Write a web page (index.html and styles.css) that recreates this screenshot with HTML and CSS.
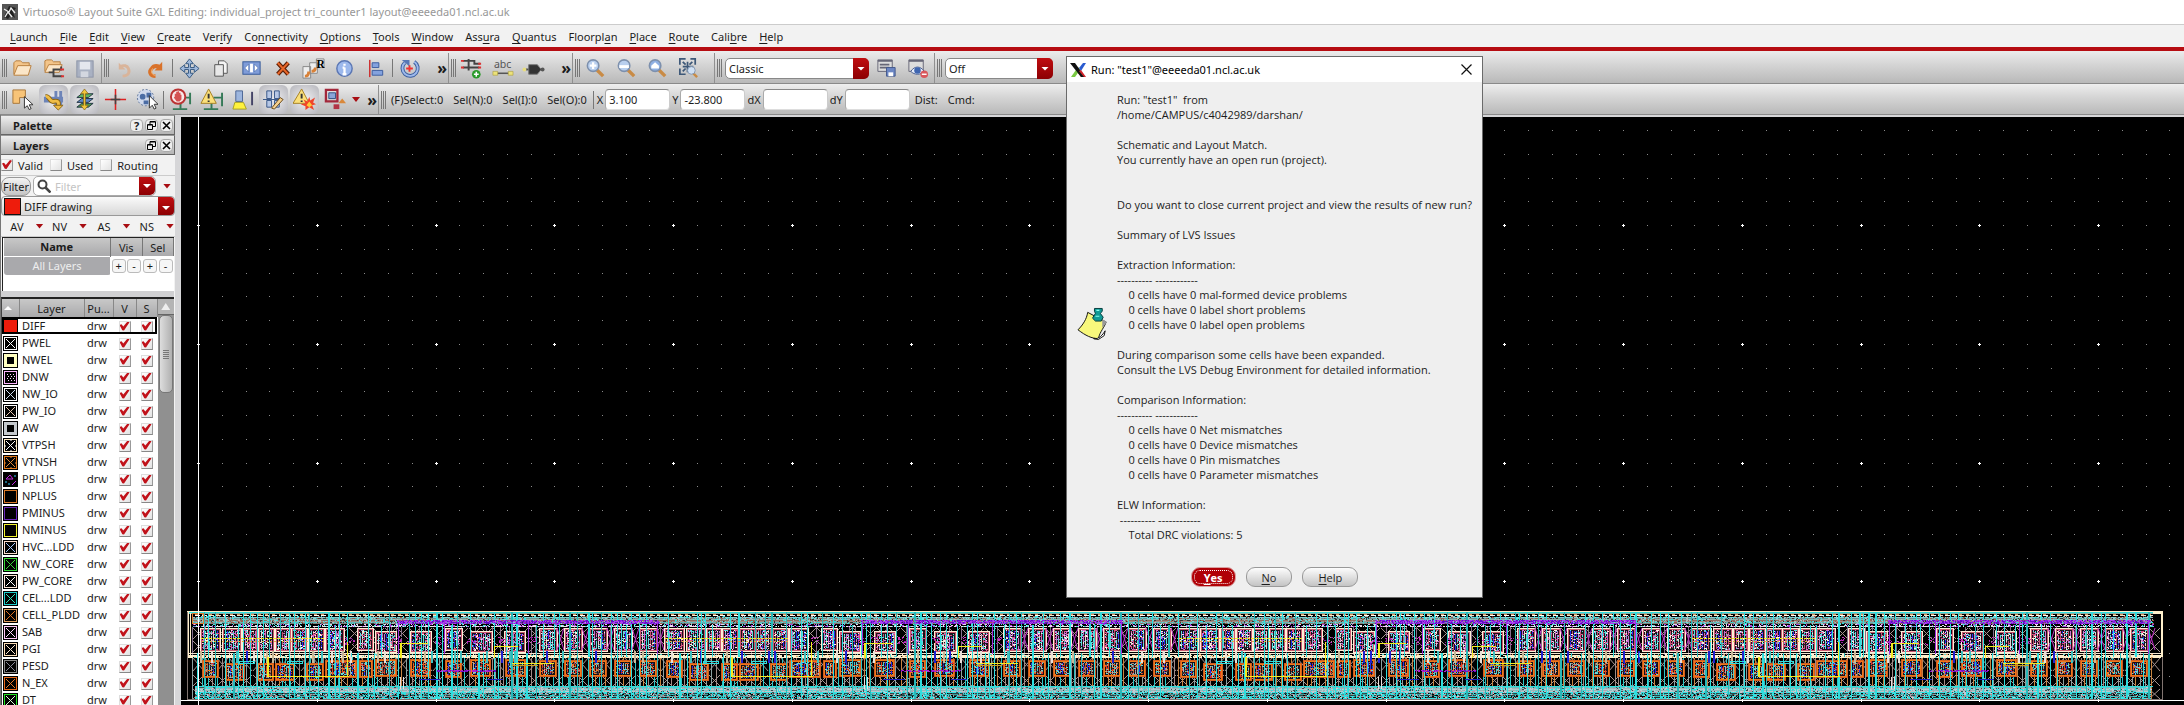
FILE: index.html
```html
<!DOCTYPE html>
<html lang="en">
<head>
<meta charset="utf-8">
<title>Virtuoso Layout Suite GXL</title>
<link rel="stylesheet" href="styles.css">
</head>
<body>
<header class="titlebar">
  <svg class="app-icon" viewBox="0 0 16 16"><rect width="16" height="16" fill="#555"/><path d="M2 13L7 2l7 2-3 4 2 6-4-3-3 4z" fill="#222"/><path d="M2 5l5 3 2-4 4 5M3 13l3-5 4 5" fill="none" stroke="#eee" stroke-width="1.3"/></svg>
  <h1 class="window-title">Virtuoso® Layout Suite GXL Editing: individual_project tri_counter1 layout@eeeeda01.ncl.ac.uk</h1>
</header>

<nav class="menubar" aria-label="Main menu">
  <button><u>L</u>aunch</button><button><u>F</u>ile</button><button><u>E</u>dit</button><button><u>V</u>iew</button><button><u>C</u>reate</button><button>Ver<u>i</u>fy</button><button>Co<u>n</u>nectivity</button><button><u>O</u>ptions</button><button><u>T</u>ools</button><button><u>W</u>indow</button><button>Ass<u>u</u>ra</button><button><u>Q</u>uantus</button><button>Floorpl<u>a</u>n</button><button><u>P</u>lace</button><button><u>R</u>oute</button><button>Cali<u>b</u>re</button><button><u>H</u>elp</button>
</nav>

<div class="toolbar toolbar-first" role="toolbar" aria-label="Edit tools">
  <div class="tool-group">
    <span class="handle"></span>
    <button class="tool" aria-label="Open"><svg viewBox="0 0 24 24"><path d="M3 18V6l2-2h5l2 2h7v3" fill="#f3c58a" stroke="#b9803f"/><path d="M3 19l4-10h14l-3 10z" fill="#fbe6c8" stroke="#b9803f"/></svg></button>
    <button class="tool" aria-label="Open hierarchy"><svg viewBox="0 0 24 24"><path d="M3 15V4l2-1h5l2 2h7v3" fill="#f3c58a" stroke="#b9803f"/><path d="M3 16l4-8h14l-3 8z" fill="#fbe6c8" stroke="#b9803f"/><path d="M7 16h5M12 12v9M12 13h8v-3M12 20h9" fill="none" stroke="#444" stroke-width="2"/><path d="M19 13h4M20 20h3" stroke="#d33" stroke-width="2"/></svg></button>
    <button class="tool" aria-label="Save" disabled><svg viewBox="0 0 24 24"><rect x="4" y="4" width="17" height="17" fill="#a9b1c2" stroke="#8d95a8"/><rect x="7" y="5" width="11" height="8" fill="#e4e7ee"/><rect x="8" y="15" width="8" height="6" fill="#d3d7e0"/></svg></button>
  </div>
  <div class="tool-group">
    <span class="handle"></span>
    <button class="tool" aria-label="Undo" disabled><svg viewBox="0 0 24 24"><path d="M10 20c6 0 8-4 6-8-1-3-5-4-8-2" fill="none" stroke="#d9b49a" stroke-width="3"/><path d="M6 6v7h7z" fill="#d9b49a"/></svg></button>
    <button class="tool" aria-label="Redo"><svg viewBox="0 0 24 24"><path d="M12 20c-6 0-7-5-4-8 2-3 5-3 8-2" fill="none" stroke="#d9722a" stroke-width="4"/><path d="M12 19c-4 0-5-4-3-7" fill="none" stroke="#f5c08a"/><path d="M19 5v9h-8z" fill="#d9722a"/></svg></button>
    <span class="divider"></span>
    <button class="tool" aria-label="Move"><svg viewBox="0 0 24 24"><path d="M12 2l4 5h-3v4h4V8l5 4-5 4v-3h-4v4h3l-4 5-4-5h3v-4H7v3l-5-4 5-4v3h4V7H8z" fill="#9fb9dc" stroke="#34577f"/></svg></button>
    <button class="tool" aria-label="Copy"><svg viewBox="0 0 24 24"><path d="M10 4h6l3 3v10h-9z" fill="#f4f4f4" stroke="#555"/><path d="M6 8h9v12H6z" fill="#e8e8e8" stroke="#555"/></svg></button>
    <button class="tool" aria-label="Stretch"><svg viewBox="0 0 24 24"><rect x="3" y="5" width="18" height="13" fill="#7f9cd8" stroke="#355a9a"/><path d="M5 11.500l4-4v8zM19 11.500l-4-4v8z" fill="#fff" stroke="#355a9a" stroke-width=".5"/><path d="M12 7v9" stroke="#fff" stroke-width="3"/></svg></button>
    <button class="tool" aria-label="Delete"><svg viewBox="0 0 24 24"><path d="M7 6l11 12M18 6L7 18" stroke="#5c1f06" stroke-width="4.500"/><path d="M7 6l11 12M18 6L7 18" stroke="#e8672a" stroke-width="2"/></svg></button>
    <button class="tool" aria-label="Repeat copy"><svg viewBox="0 0 24 24"><path d="M1 10h8v12H1zM8 6h8v11H8zM15 2h8v9h-8z" fill="#eee" stroke="#888"/><path d="M3 20c3 0 4-2 4-5M10 15c3 0 4-2 4-4" fill="none" stroke="#d88138" stroke-width="3"/><text x="15" y="11" class="glyph-r">R</text></svg></button>
    <button class="tool" aria-label="Properties"><svg viewBox="0 0 24 24"><circle cx="12" cy="12" r="8" fill="#9cb8ec" stroke="#5b77b4" stroke-width="1.500"/><path d="M12 7v2M12 11v7M10 18h4M10 11h2" stroke="#fff" stroke-width="2.400"/></svg></button>
    <button class="tool" aria-label="Align left"><svg viewBox="0 0 24 24"><path d="M6 3v18" stroke="#c33" stroke-width="1.600"/><path d="M8.500 6h7v5h-7zM8.500 14h11v5h-11z" fill="#84a2de" stroke="#3c5c9f"/></svg></button>
    <span class="divider"></span>
    <button class="tool" aria-label="Rotate"><svg viewBox="0 0 24 24"><path d="M17 5a8 8 0 1 1-10 1" fill="none" stroke="#3d5f9d" stroke-width="4"/><path d="M17 5a8 8 0 1 1-10 1" fill="none" stroke="#9db9ec" stroke-width="2"/><path d="M4 3h8v7z" fill="#5677b6"/><path d="M12 8.500v7M8.500 12h7" stroke="#e33" stroke-width="2"/></svg></button>
    <button class="more" aria-label="More edit tools">»</button>
  </div>
  <div class="tool-group">
    <span class="handle"></span>
    <button class="tool" aria-label="Add instance"><svg viewBox="0 0 24 24"><path d="M3 4h6M3 11h6M9 2v12M9 4h6v3h6M9 11h11" fill="none" stroke="#444" stroke-width="2"/><path d="M1 4h3M1 11h3M19 7h3M19 11h3" stroke="#d33" stroke-width="2"/><circle cx="17" cy="18" r="4.500" fill="#2a9a2a"/><path d="M17 15.500v5M14.500 18h5" stroke="#fff" stroke-width="1.600"/></svg></button>
    <button class="tool" aria-label="Wire name"><svg viewBox="0 0 24 24"><text x="3" y="11" class="glyph-abc">abc</text><path d="M4 17h17" stroke="#555" stroke-width="1.600"/><path d="M2 15h5v4H2zM18 15h5v4h-5z" fill="#ece27a" stroke="#a79a3a" stroke-width=".6"/></svg></button>
    <button class="tool" aria-label="Pin"><svg viewBox="0 0 24 24"><path d="M1 13h22" stroke="#555" stroke-width="2"/><path d="M7 8h9l4 5-4 5H7z" fill="#333" stroke="#777"/><circle cx="2.500" cy="13" r="2" fill="#e8de80"/><circle cx="21.500" cy="13" r="2" fill="#555"/></svg></button>
    <button class="more" aria-label="More create tools">»</button>
  </div>
  <div class="tool-group zoom-group">
    <span class="handle"></span>
    <button class="tool" aria-label="Zoom in"><svg viewBox="0 0 24 24"><path d="M13 13l7 7" stroke="#c98b45" stroke-width="3.500"/><circle cx="9.500" cy="9" r="6" fill="#b9cfee" stroke="#7d90ad" stroke-width="1.600"/><path d="M9.500 5.500v7M6 9h7" stroke="#fff" stroke-width="2.400"/></svg></button>
    <button class="tool" aria-label="Zoom out"><svg viewBox="0 0 24 24"><path d="M13 13l7 7" stroke="#c98b45" stroke-width="3.500"/><circle cx="9.500" cy="9" r="6" fill="#b9cfee" stroke="#7d90ad" stroke-width="1.600"/><path d="M4.500 10h10" stroke="#fff" stroke-width="3"/></svg></button>
    <button class="tool" aria-label="Zoom previous"><svg viewBox="0 0 24 24"><path d="M13 13l7 7" stroke="#c98b45" stroke-width="3.500"/><circle cx="9.500" cy="9" r="6" fill="#8fb0e4" stroke="#7d90ad" stroke-width="1.600"/><path d="M5.500 9l4-3.500 4 3.500v3h-8z" fill="#fff"/></svg></button>
    <button class="tool" aria-label="Zoom to fit"><svg viewBox="0 0 24 24"><path d="M3 8V2h6M14 2h5v6M3 12v6h6M11 5v11M6 10h11M6 5l3 3M16 5l-3 3M6 15l3-3" fill="none" stroke="#3d5878" stroke-width="1.800"/><path d="M16 16l5 5" stroke="#c98b45" stroke-width="2.500"/><circle cx="15" cy="14" r="4" fill="#cfe0f4" stroke="#8496b0"/></svg></button>
  </div>
  <div class="tool-group">
    <span class="handle"></span>
    <span class="picker picker-lg"><select aria-label="Workspace"><option>Classic</option></select></span>
    <button class="tool" aria-label="Save workspace"><svg viewBox="0 0 24 24"><path d="M3 3h15v12H3z" fill="#ddd" stroke="#667"/><path d="M3 4h15M5 8h10M5 11h10" stroke="#667" stroke-width="1.800"/><path d="M12 11h9v9h-9z" fill="#6c87c4" stroke="#44598c"/><path d="M14 16h5v4h-5z" fill="#fff"/></svg></button>
    <button class="tool" aria-label="Hide workspace"><svg viewBox="0 0 24 24"><path d="M3 3h15v12H3z" fill="#ddd" stroke="#667"/><path d="M3 4h15" stroke="#667" stroke-width="2"/><path d="M5 15c4-6 10-6 14 0-4 4-10 4-14 0z" fill="#e8eefa" stroke="#44598c"/><circle cx="12" cy="14" r="3.400" fill="#3f66b0"/><circle cx="19" cy="18" r="4" fill="#d9575c"/><path d="M16.500 18h5" stroke="#fff" stroke-width="1.500"/></svg></button>
  </div>
  <div class="tool-group tool-group-last">
    <span class="handle"></span>
    <span class="picker picker-sm"><select aria-label="Dimming"><option>Off</option></select></span>
  </div>
</div>

<div class="toolbar toolbar-second" role="toolbar" aria-label="Layout tools">
  <div class="tool-group">
    <span class="handle"></span>
    <button class="tool" aria-label="Select"><svg viewBox="0 0 24 24"><path d="M2 2h13v8H9v6H2z" fill="#f8c478" stroke="#a8763a"/><path d="M14 9v12l3-2.500 2 4 2-1-2-4h4z" fill="#fff" stroke="#333"/></svg></button>
    <button class="tool pressed" aria-label="Route"><svg viewBox="0 0 24 24"><path d="M2 9h20v6H2zM13 3h3v15h-3zM18 3h3v15h-3z" fill="#6d84b8"/><path d="M4 9c4-1 4 6 8 5s6 0 5 5" fill="none" stroke="#8b6413" stroke-width="5"/><path d="M4 9c4-1 4 6 8 5s6 0 5 5" fill="none" stroke="#f0bd45" stroke-width="3"/><path d="M12 18h10l-5 5z" fill="#f0bd45" stroke="#8b6413"/></svg></button>
    <button class="tool pressed" aria-label="Layers up and down"><svg viewBox="0 0 24 24"><path d="M4 20l5-4h12l-5 4z" fill="#4f9a50" stroke="#234"/><path d="M4 15l5-4h12l-5 4z" fill="#5f86c4" stroke="#234"/><path d="M4 10l5-4h12l-5 4z" fill="#5fb364" stroke="#234"/><path d="M12 1l4 5h-3v12h3l-4 5-4-5h3V6H8z" fill="#f2c53a" stroke="#7b5a10" stroke-width=".7"/></svg></button>
    <button class="tool" aria-label="Crosshair"><svg viewBox="0 0 24 24"><path d="M12 1v22M1 12h22" stroke="#d22" stroke-width="1.600"/><path d="M12 7v10M7 12h10" stroke="#444" stroke-width="1.600"/></svg></button>
    <button class="tool" aria-label="Partial select"><svg viewBox="0 0 24 24"><circle cx="11" cy="10" r="8.500" fill="#cfd9ec" stroke="#5b7299" stroke-dasharray="2 2"/><circle cx="8" cy="9" r="3" fill="#4a6ca4"/><path d="M12 5h5v5h-5zM9 13h5v4H9z" fill="#4a6ca4"/><path d="M15 8v13l3-3 2 4 2-1-2-4h4z" fill="#fff" stroke="#333"/></svg></button>
    <span class="divider"></span>
    <button class="tool" aria-label="DRC stop"><svg viewBox="0 0 24 24"><path d="M22 5v12M4 22h15M12 16v6M16 10h6" stroke="#367a58" stroke-width="2"/><circle cx="9.500" cy="9" r="7.500" fill="#f8e8e8" stroke="#b33" stroke-width="2"/><path d="M6 9V6h1.500V4H9v-.500h1.500V5H12v2h1v5l-2 2H8l-3-4z" fill="#d45252"/></svg></button>
    <button class="tool" aria-label="DRC notify"><svg viewBox="0 0 24 24"><path d="M23 5v14M4 22h15M12 16v6M14 10h8" stroke="#367a58" stroke-width="2"/><path d="M9 1l8 15H1z" fill="#fbe07a" stroke="#a57f23"/><path d="M9 6v5M9 13v1.500" stroke="#333" stroke-width="2"/></svg></button>
    <button class="tool" aria-label="Highlight"><svg viewBox="0 0 24 24"><path d="M22 4v14" stroke="#446" stroke-width="2"/><path d="M5 3h7v11H5z" fill="#9db6de" stroke="#4c6694"/><path d="M4 15h9l3 7H2z" fill="#fff23c" stroke="#a8a020"/></svg></button>
    <button class="tool pressed" aria-label="Edit in place"><svg viewBox="0 0 24 24"><path d="M5 3h5v8H5zM13 3h5v8h-5zM5 13h5v7H5zM13 13h5v7h-5z" fill="#b6c7e6" stroke="#345486"/><path d="M1 12h21" stroke="#345486"/><path d="M10 21l9-11 3 2-9 10z" fill="#f5d08e" stroke="#6b4a18"/></svg></button>
    <button class="tool pressed" aria-label="Violations"><svg viewBox="0 0 24 24"><path d="M9 1l8 15H0z" fill="#fbe07a" stroke="#a57f23"/><path d="M9 6v5M9 13v1.500" stroke="#333" stroke-width="2"/><path d="M17 9l1 4 5-3-2 5 3 2-4 1 2 5-5-3-4 3v-4l-5-2 5-1-2-4 4 2z" fill="#f0442a"/><path d="M17 14l3 4-3 2-3-2z" fill="#fcca3c"/></svg></button>
    <button class="tool" aria-label="Abstraction"><svg viewBox="0 0 24 24"><path d="M2 2h12v12H2z" fill="none" stroke="#a3283b" stroke-width="2.400"/><path d="M5 5h7v6H5z" fill="#8aa5d8" stroke="#345486"/><path d="M10 17h6v5h-6z" fill="#b23344"/><path d="M19 11l4 5h-8z" fill="#d9883a"/></svg></button>
    <button class="drop" aria-label="Abstraction options"></button>
    <button class="more more-tight" aria-label="More layout tools">»</button>
  </div>
  <form class="tool-group tool-group-last status">
    <span class="handle"></span>
    <span class="stat stat-first">(F)Select:0</span><span class="stat">Sel(N):0</span><span class="stat">Sel(I):0</span><span class="stat stat-last">Sel(O):0</span>
    <span class="divider"></span>
    <label for="cx">X</label><input id="cx" value="3.100">
    <label for="cy">Y</label><input id="cy" value="-23.800">
    <label for="cdx">dX</label><input id="cdx">
    <label for="cdy">dY</label><input id="cdy">
    <span class="stat stat-dist">Dist:</span><span class="stat">Cmd:</span>
  </form>
</div>

<main class="workspace">
  <aside class="sidebar">
    <div class="panel-head"><h2>Palette</h2><button aria-label="Help on palette">?</button><button aria-label="Float palette"><svg viewBox="0 0 9 9"><path d="M3 3V.500h5.500v5H6M.500 3.500h5v5h-5zM3 1h5M1 4h4" fill="none" stroke="#000"/></svg></button><button aria-label="Close palette"><svg viewBox="0 0 9 9"><path d="M1 1l7 7M8 1L1 8" stroke="#000" stroke-width="1.600"/></svg></button></div>
    <div class="panel-head"><h2>Layers</h2><button aria-label="Float layers"><svg viewBox="0 0 9 9"><path d="M3 3V.500h5.500v5H6M.500 3.500h5v5h-5zM3 1h5M1 4h4" fill="none" stroke="#000"/></svg></button><button aria-label="Close layers"><svg viewBox="0 0 9 9"><path d="M1 1l7 7M8 1L1 8" stroke="#000" stroke-width="1.600"/></svg></button></div>
    <div class="checks">
      <label><input type="checkbox" checked>Valid</label><label><input type="checkbox">Used</label><label><input type="checkbox">Routing</label>
    </div>
    <div class="filter">
      <button class="filter-btn">Filter</button>
      <div class="search">
        <svg viewBox="0 0 14 14"><circle cx="5.500" cy="5.500" r="4" fill="none" stroke="#444" stroke-width="2"/><path d="M8.500 8.500l5 5" stroke="#444" stroke-width="2.600"/></svg>
        <input aria-label="Filter layers" placeholder="Filter">
        <button class="red-arrow" aria-label="Filter history"></button>
      </div>
      <button class="drop" aria-label="Filter options"></button>
    </div>
    <div class="current"><span class="current-chip"></span><select aria-label="Current layer"><option>DIFF drawing</option></select></div>
    <div class="quick"><button>AV</button><button>NV</button><button>AS</button><button>NS</button></div>
    <div class="sets">
      <table>
        <thead><tr><th class="sets-name">Name</th><th colspan="2">Vis</th><th colspan="2">Sel</th></tr></thead>
        <tbody><tr><td class="sets-all">All Layers</td><td><button>+</button></td><td><button>-</button></td><td><button>+</button></td><td><button>-</button></td></tr></tbody>
      </table>
    </div>
    <div class="layers">
      <table>
        <thead><tr><th class="col-sw"><span class="sort"></span></th><th class="col-name">Layer</th><th class="col-pu">Pu...</th><th class="col-v">V</th><th class="col-s">S</th></tr></thead>
        <tbody id="layer-rows"></tbody>
      </table>
      <div class="scroll"><button class="scroll-up" aria-label="Scroll up"></button><div class="thumb"></div></div>
    </div>
  </aside>
  <div class="design"><canvas id="layout-view"></canvas></div>
</main>

<section class="dialog" role="dialog" aria-labelledby="dlg-title">
  <header class="dialog-head">
    <svg class="x-logo" viewBox="0 0 16 16"><path d="M10 9l5 6h-4l-3-4z" fill="#d2232a"/><path d="M1 15h4l5-7-2-3z" fill="#7ac943"/><path d="M9 6l4-5h3l-5 8z" fill="#2a5bd0"/><path d="M0 1h5l10 14h-4z" fill="#111"/><path d="M9 9l5 6h2l-5-7z" fill="#d2232a"/></svg>
    <h2 id="dlg-title">Run: "test1"@eeeeda01.ncl.ac.uk</h2>
    <button class="dialog-close" aria-label="Close"><svg viewBox="0 0 11 11"><path d="M.500.500l10 10M10.500.500l-10 10" stroke="#111" stroke-width="1.200"/></svg></button>
  </header>
  <div class="dialog-body">
    <svg class="note" viewBox="0 0 34 34"><path d="M11 5L30 15c-2 6-6 9-8 17-7 0-13-3-21-9C6 18 10 12 11 5z" fill="#f8f87c" stroke="#111"/><path d="M17 32c3 1 8-1 12-8l-1 5-6 4z" fill="#fff" stroke="#111"/><path d="M26 12l5 3-5 6" fill="#999"/><path d="M18 1h8v3l-2 2 3 4-2 4h-6l-3-3 3-5-1-2z" fill="#129a96" stroke="#053c3c"/><path d="M20 3h3M19 9h4" stroke="#8fe" stroke-width="1.200"/></svg>
    <pre class="message">Run: "test1"  from
/home/CAMPUS/c4042989/darshan/

Schematic and Layout Match.
You currently have an open run (project).


Do you want to close current project and view the results of new run?

Summary of LVS Issues

Extraction Information:
---------- ------------
    0 cells have 0 mal-formed device problems
    0 cells have 0 label short problems
    0 cells have 0 label open problems

During comparison some cells have been expanded.
Consult the LVS Debug Environment for detailed information.

Comparison Information:
---------- ------------
    0 cells have 0 Net mismatches
    0 cells have 0 Device mismatches
    0 cells have 0 Pin mismatches
    0 cells have 0 Parameter mismatches

ELW Information:
 ---------- ------------
    Total DRC violations: 5</pre>
  </div>
  <footer class="dialog-actions"><button class="primary"><u>Y</u>es</button><button><u>N</u>o</button><button><u>H</u>elp</button></footer>
</section>
<script src="app.js"></script>
</body>
</html>
```
FILE: styles.css
```css
* { box-sizing: border-box; }
body { margin: 0; height: 100vh; display: flex; flex-direction: column; overflow: hidden; background: #d4d4d4; color: #1c1c1c; font: 11px/15px "Noto Sans", "Open Sans", sans-serif; }
button, input, select { font: inherit; color: inherit; margin: 0; padding: 0; border: 0; background: none; }
h1, h2 { margin: 0; font-size: inherit; font-weight: normal; }
table { border-collapse: collapse; table-layout: fixed; }
td, th { padding: 0; font-weight: normal; }

.titlebar { flex: none; height: 24px; display: flex; align-items: center; gap: 5px; padding-left: 2px; background: #fff; }
.app-icon { width: 16px; height: 16px; }
.window-title { color: #979797; font: 11px/16px "Noto Sans", sans-serif; }

.menubar { flex: none; height: 23px; display: flex; align-items: center; padding-left: 4px; background: #f2f2f2; border-top: 1px solid #ccc; }
.menubar button { padding: 0 6px; }
.menubar u, .dialog-actions u { text-underline-offset: 2px; }

.toolbar { flex: none; display: flex; background: linear-gradient(#ececec, #d6d6d6 40%, #b9b9b9); border-bottom: 1px solid #8a8a8a; }
.toolbar-first { height: 37px; padding-top: 2px; border-top: 4px solid #b60d12; }
.toolbar-second { height: 31px; border-top: 1px solid #eee; }
.tool-group { display: flex; align-items: center; padding: 0 1px 0 2px; border-right: 1px solid #909090; }
.tool-group-last { flex: 1; border-right: 0; }
.zoom-group { padding-right: 10px; }
.handle { width: 5px; height: 18px; border-left: 1px solid #777; border-right: 1px solid #777; background: linear-gradient(90deg, transparent 1px, #777 1px 2px, transparent 2px); }
.tool { width: 31px; height: 29px; display: grid; place-items: center; border-radius: 6px; }
.tool svg { width: 23px; height: 23px; }
.tool.pressed { background: radial-gradient(#f2f2f4, #b4b4ba); width: 29px; margin: 0 1px; }
.glyph-r { font: bold 12px "Liberation Serif", serif; }
.glyph-abc { font: 11px "Noto Sans", sans-serif; fill: #555; }
.divider { width: 1px; height: 18px; margin: 0 1px; background: #777; }
.more { width: 22px; text-align: right; font-size: 16px; font-weight: bold; line-height: 20px; }
.more-tight { width: 16px; }
.drop { width: 10px; height: 10px; display: grid; place-items: center; }
.drop::after, .quick button::after { content: ""; width: 8px; height: 5px; background: #a80d12; clip-path: polygon(0 0, 100% 0, 50% 100%); }
.picker { position: relative; height: 21px; margin: 0 2px 0 3px; }
.picker select { appearance: none; width: 100%; height: 21px; padding: 0 3px; border: 1px solid #888; border-radius: 5px; background: #fff; }
.picker::after, .red-arrow { content: ""; background: linear-gradient(#c00d10, #8c0003); border-radius: 0 5px 5px 0; }
.picker::after { position: absolute; right: 0; top: 0; width: 16px; height: 21px; pointer-events: none; }
.picker::before, .current::before { content: ""; position: absolute; z-index: 1; right: 4px; top: 9px; width: 8px; height: 4px; background: #fff; clip-path: polygon(0 0, 100% 0, 50% 100%); pointer-events: none; }
.picker-lg { width: 144px; }
.picker-sm { width: 108px; }
.stat { margin-left: 10px; }
.stat-first, .stat-dist { margin-left: 5px; }
.stat-last { margin-right: 5px; }
.status label { padding: 0 2px; }
.status input { width: 65px; height: 21px; padding: 0 3px; border: 1px solid #999; border-color: #888 #ccc #ddd #aaa; border-radius: 4px; background: #fff; }

.workspace { flex: 1; min-height: 0; display: flex; background: #d6d6d8; }
.sidebar { flex: none; width: 175px; display: flex; flex-direction: column; background: #f2f2f2; border-left: 1px solid #777; overflow: hidden; }
.design { flex: 1; min-width: 0; margin: 2px 0 0 6px; background: #000; overflow: hidden; }
.design canvas { display: block; }
.panel-head { flex: none; height: 20px; display: flex; align-items: center; gap: 2px; padding: 0 1px 0 12px; background: linear-gradient(#efefef, #b4b4b4); border: 1px solid #666; border-left: 0; border-top-color: #999; }
.panel-head h2 { flex: 1; font-weight: bold; line-height: 15px; }
.panel-head button { width: 13px; height: 13px; display: grid; place-items: center; border: 1px solid #aaa; border-radius: 4px; background: #eee; font-weight: bold; line-height: 11px; }
.panel-head svg { width: 9px; height: 9px; }
.checks { flex: none; height: 21px; display: flex; align-items: center; gap: 7px; border-bottom: 1px solid #ccc; }
.checks label { display: flex; align-items: center; gap: 5px; }
input[type="checkbox"] { appearance: none; width: 12px; height: 12px; display: grid; background: linear-gradient(135deg, #fff, #e2e2e2); border: 1px solid #ddd; border-right-color: #999; border-bottom-color: #888; }
input[type="checkbox"]:checked::before { content: ""; width: 10px; height: 9px; background: #c1121a; clip-path: polygon(0 40%, 20% 30%, 38% 55%, 80% 0, 100% 8%, 45% 100%, 28% 98%); }
.filter { flex: none; height: 20px; display: flex; align-items: center; gap: 2px; }
.filter-btn { width: 30px; height: 19px; border: 1px solid #999; border-radius: 8px; background: linear-gradient(#f4f4f4, #c4c4c4); }
.search { width: 123px; height: 20px; display: flex; align-items: center; border: 1px solid #aaa; border-radius: 5px; background: #fff; }
.search svg { width: 14px; height: 14px; margin: 0 4px 0 3px; flex: none; }
.search input { flex: 1; min-width: 0; }
.search input::placeholder { color: #c4c4c4; opacity: 1; }
.red-arrow { width: 16px; height: 18px; display: grid; place-items: center; }
.red-arrow::after { content: ""; width: 8px; height: 4px; background: #fff; clip-path: polygon(0 0, 100% 0, 50% 100%); }
.filter .drop { margin-left: 4px; }
.current { position: relative; flex: none; height: 20px; display: flex; align-items: center; padding-left: 2px; border: 1px solid #999; border-radius: 4px; background: linear-gradient(#fafafa, #d8d8d8); }
.current::after { content: ""; position: absolute; right: 0; top: 0; width: 16px; height: 18px; background: linear-gradient(#c00d10, #8c0003); border-radius: 0 4px 4px 0; pointer-events: none; }
.current-chip { width: 17px; height: 17px; background: #ee1c0c; border: 1px solid #111; }
.current select { flex: 1; appearance: none; padding-left: 3px; }
.quick { flex: none; height: 21px; display: flex; align-items: center; border-bottom: 1px solid #ccc; }
.quick button { width: 44px; display: flex; align-items: center; justify-content: flex-end; gap: 12px; padding-right: 1px; }
.sets { flex: none; height: 54px; margin: 0 1px 0; border: 1px solid #222; border-right: 0; border-bottom: 0; background: #fff; }
.sets table { width: 100%; }
.sets th { height: 18px; background: linear-gradient(#c8c8c8, #a9a9ab); border-right: 1px solid #777; }
.sets .sets-name { width: 107px; font-weight: bold; }
.sets td { height: 19px; text-align: center; }
.sets .sets-all { background: #a9a9ac; color: #eee; border: 1px solid #fff; border-radius: 3px; }
.sets td button { width: 14px; height: 14px; border: 1px solid #bbb; border-radius: 3px; background: #f6f6f6; line-height: 12px; }
.layers { flex: 1; min-height: 0; display: flex; margin: 6px 1px 0 0; border-left: 1px solid #444; border-top: 2px solid #222; box-shadow: 0 -6px 0 #d0d0d2; overflow: hidden; background: #fff; }
.layers table { flex: none; width: 155px; height: max-content; }
.layers th { height: 18px; background: linear-gradient(#c8c8c8, #a9a9ab); border-right: 1px solid #888; }
.col-sw { width: 17px; }
.col-name { width: 65px; }
.col-pu { width: 29px; }
.col-v { width: 23px; }
.col-s { width: 21px; }
.layers td { height: 17px; line-height: 16px; white-space: nowrap; }
.layers td:nth-child(2), .layers td:nth-child(3) { padding-left: 3px; }
.layers td input { margin: 2px auto 0; }
.layers td svg { display: block; width: 15px; height: 15px; margin: 1px 0 0 1px; }
.layers .current-row { outline: 2px solid #000; outline-offset: -2px; }
.sort { display: block; width: 8px; height: 4px; margin-left: 2px; background: #fff; clip-path: polygon(50% 0, 100% 100%, 0 100%); }
.scroll { flex: 1; background: #909090; }
.scroll-up { width: 100%; height: 16px; display: grid; place-items: center; background: #b4b4b4; border-bottom: 1px solid #666; }
.scroll-up::after { content: ""; width: 9px; height: 7px; background: #eee; clip-path: polygon(50% 0, 100% 100%, 0 100%); }
.thumb { height: 78px; margin: 0 1px; border: 1px solid #777; border-radius: 5px; background: linear-gradient(90deg, #ddd, #b0b0b0); display: grid; place-items: center; }
.thumb::after { content: ""; width: 6px; height: 9px; background: repeating-linear-gradient(#777 0 1px, transparent 1px 2px); }

.dialog { position: absolute; left: 1066px; top: 56px; width: 417px; background: #efefef; border: 1px solid #6a6a6a; font: 11px/15px "Open Sans", sans-serif; }
.dialog-head { height: 25px; display: flex; align-items: center; gap: 5px; padding: 0 10px 0 3px; background: #fff; color: #000; }
.dialog-head h2 { flex: 1; font-family: "Noto Sans", sans-serif; }
.x-logo { width: 16px; height: 16px; }
.dialog-close { width: 11px; height: 11px; }
.dialog-close svg { display: block; }
.dialog-body { display: flex; align-items: center; gap: 7px; padding: 10px 9px 25px 10px; }
.note { width: 33px; height: 34px; flex: none; margin-top: 14px; }
.message { margin: 0; font: inherit; white-space: pre; }
.dialog-actions { display: flex; justify-content: center; gap: 10px; padding-bottom: 10px; }
.dialog-actions button { height: 20px; padding: 0 15px; border: 1px solid #999; border-radius: 9px; background: linear-gradient(#fdfdfd, #c4c4c4); }
.dialog-actions .primary { padding: 0 12px; color: #fff; font-weight: bold; background: #b00006; border-color: #d9a0a0; outline: 1px dotted #fff; outline-offset: -4px; }
```
FILE: app.js
```js
// name, swatch kind, border colour, inner colour
const layers = [
  ['DIFF', 'solid', '#000', '#ee1c0c'], ['PWEL', 'x', '#fff', '#fff'], ['NWEL', 'box', '#ffffc0', '#ffffc0'],
  ['DNW', 'dots', '#ffb8ff', '#ffd8ff'], ['NW_IO', 'x', '#fff', '#cde'], ['PW_IO', 'x', '#fff', '#e8c8b0'],
  ['AW', 'box', '#c4c8cc', '#c4c8cc'], ['VTPSH', 'xx', '#ffe9c0', '#fff'], ['VTNSH', 'xx', '#e07818', '#e08838'],
  ['PPLUS', 'tri', '#000', '#c028e0'], ['NPLUS', 'none', '#d87828', ''], ['PMINUS', 'none', '#6a28b8', ''],
  ['NMINUS', 'none', '#f4f430', ''], ['HVC...LDD', 'x', '#ffe0d0', '#a8c8ff'], ['NW_CORE', 'x', '#38d838', '#38d838'],
  ['PW_CORE', 'x', '#ffe8d8', '#fff'], ['CEL...LDD', 'x', '#20d0d0', '#30e8c0'], ['CELL_PLDD', 'x', '#e0a060', '#e07020'],
  ['SAB', 'x', '#ffc8f8', '#ffd8ff'], ['PGI', 'x', '#ffe0b8', '#ffe8d0'], ['PESD', 'x', '#888', '#889'],
  ['N_EX', 'x', '#e86818', '#e87828'], ['DT', 'x', '#20e020', '#d8ffd8']
];

function swatch(kind, edge, ink) {
  let inner = '';
  if (kind === 'x' || kind === 'xx') inner = `<path d="M3 3l9 9M12 3l-9 9" stroke="${ink}"/>`;
  if (kind === 'xx') inner += `<path d="M7 2h2M7 13h2M2 7v2M13 7v2" stroke="${ink}"/>`;
  if (kind === 'box') inner = `<path d="M2 2h11v11H2z" fill="${ink}"/><path d="M4 4h7v7H4z" fill="#000"/>`;
  if (kind === 'dots') inner = `<path d="M4 4.500h8M5 6.500h7M4 8.500h8M5 10.500h7" stroke="${ink}" stroke-dasharray="1 2"/>`;
  if (kind === 'tri') inner = `<path d="M3 7l4-4 3 4zM9 13l4-4" fill="none" stroke="${ink}"/><path d="M2 10h2M5 12h2M11 4h2" stroke="#3cf"/>`;
  const bg = kind === 'solid' ? ink : '#000';
  return `<svg viewBox="0 0 15 15"><rect width="15" height="15" fill="#000"/><rect x="1.500" y="1.500" width="12" height="12" fill="${bg}" stroke="${kind === 'solid' ? ink : edge}"/>${inner}</svg>`;
}

document.getElementById('layer-rows').innerHTML = layers.map(([name, kind, edge, ink], i) =>
  `<tr class="${i ? '' : 'current-row'}"><td>${swatch(kind, edge, ink)}</td><td>${name}</td><td>drw</td>` +
  `<td><input type="checkbox" checked aria-label="${name} visible"></td><td><input type="checkbox" checked aria-label="${name} selectable"></td></tr>`).join('');

const canvas = document.getElementById('layout-view');
canvas.width = canvas.parentElement.clientWidth;
canvas.height = canvas.parentElement.clientHeight;
const g = canvas.getContext('2d');
const W = canvas.width, H = canvas.height;
let seed = 7;
const rnd = () => { seed = (seed * 1103515245 + 12345) % 2147483648; return seed / 2147483648; };
const pick = list => list[Math.floor(rnd() * list.length)];
const box = (x, y, w, h, c) => { g.fillStyle = c; g.fillRect(Math.round(x), Math.round(y), Math.round(w), Math.round(h)); };
const frame = (x, y, w, h, c) => { g.strokeStyle = c; g.lineWidth = 1; g.strokeRect(Math.round(x) + .5, Math.round(y) + .5, Math.round(w) - 1, Math.round(h) - 1); };
const noise = (x0, x1, y0, y1, colors, density) => {
  for (let y = y0; y < y1; y++) for (let x = x0; x < x1; x++) if (rnd() < density) box(x, y, rnd() < .3 ? 2 : 1, 1, pick(colors));
};
const cross = (x, y, w, h, c) => {
  g.strokeStyle = c; g.lineWidth = 1; g.beginPath();
  g.moveTo(x, y); g.lineTo(x + w, y + h); g.moveTo(x + w, y); g.lineTo(x, y + h); g.stroke();
};

// reference grid and axes
const AX = 17, AY = 583, STEP = 23.75;
for (let j = 0; j < 30; j++) for (let i = 0; AX + i * STEP < W; i++) {
  const x = AX + i * STEP, y = AY - j * STEP;
  if (y < 0) break;
  if (i % 5 || j % 5) box(x, y, 1, 1, '#8a8a8a');
  else { box(x - 1, y, 3, 1, '#fff'); box(x, y - 1, 1, 3, '#fff'); }
}

// standard-cell row
const L = 6, R = 1980, T = 494;
const CYAN = '#30dede', GREY = '#a89490', CREAM = '#fff0cc';
box(L, T, R - L, 90, '#000');
for (let x = L + 6; x < R - 8; x += 12) {
  cross(x, T + 17, 11, 11, GREY); cross(x, T + 30, 11, 11, GREY);
  cross(x, T + 47, 11, 13, GREY); cross(x, T + 64, 11, 11, GREY); cross(x, T + 78, 11, 10, GREY);
}
for (let x = L + 5; x < R - 6; x += 3 + Math.floor(rnd() * 4)) {
  box(x, T + 46, 1, 43, pick(['#a08a86', '#c88440', '#8ca0a0', '#2ac4c4']));
  if (rnd() < .4) box(x, T + 16, 1, 30, '#86708a');
}

// one transistor block: framed stack of vertical fingers with contact speckle
function device(x, y, w, h, n) {
  box(x, y, w, h, '#181018');
  frame(x, y, w, h, n ? '#d05c20' : '#fff0d8');
  frame(x + 1, y + 1, w - 2, h - 2, n ? '#f07818' : '#c85a70');
  for (let i = 3; i < w - 3; i += 2) {
    const c = pick(n ? ['#2430e8', '#50c8c8', '#e04820', '#a06850', '#a8b0b8'] : ['#2828f0', '#60dede', '#c870d0', '#e0d8d0', '#c05070']);
    box(x + i, y + 3, 1, h - 6, c);
  }
  noise(Math.round(x) + 2, Math.round(x + w) - 3, Math.round(y) + 2, Math.round(y + h) - 2, n ? ['#f07820', '#d83030', '#60dcdc', '#333', '#b0907c'] : ['#d070d8', '#fff0e0', '#50dcdc', '#202028', '#e05088'], .34);
}

// supply rail at the top
[['#fff0cc', 0], [CYAN, 1], ['#88b4ae', 2]].forEach(([c, y]) => box(L, T + y, R - L, 1, c));
for (let x = L + 8; x < R - 8; x += 7) { box(x, T + 4, 5, 1, pick(['#fff', '#f0e8d0'])); box(x, T + 3, 3, 1, '#d09050'); }
['#7ad2d2', '#6e9092', '#92b0ac', '#8c6c60', '#a08e86', '#62b4b4', '#84807c'].forEach((c, i) => box(L + 6, T + 6 + i, R - L - 16, 1, c));
noise(L + 6, R - 8, T + 5, T + 13, [CYAN, '#333', '#b0bcbc', '#9c5c48', '#70d8d8'], .28);
box(L + 6, T + 15, R - L - 14, 1, '#f0e8e8');
noise(L + 6, R - 8, T + 13, T + 16, ['#e8d8f0', '#b040e0', '#50dcdc', '#000'], .45);

const starts = [216, 680, 1194, 1707];
const third = v => v / 3;
starts.forEach((P, k) => {
  const next = starts[k + 1] ? starts[k + 1] - 198 : R - 10;
  [[-590, 62], [-525, 60], [-465, 49], [-418, 51], [-367, 50], [-317, 50], [-267, 52], [-215, 60]]
    .forEach(([a, w]) => device(P + third(a), T + 17, third(w), 24, false));
  device(P - 40, T + 17, 17, 23, false);
  [[-65, 67], [40, 67], [218, 70], [322, 66]].forEach(([a, w]) => device(P + third(a), T + 20, third(w), 22, false));
  device(P + 48, T + 17, 18, 23, false);
  for (let x = P + 142; x < next - 16; x += 25) {
    device(x, T + 17, 19, 24, false); device(x, T + 49, 18, 17, true);
    cross(x + 18, T + 17, 7, 22, '#c030c8');
  }
  [[-585, 50, 0], [-517, 61, 3], [-420, 50, 3], [-365, 60, 3], [-272, 54, 3], [-215, 97, 0], [-115, 42, 0], [-65, 67, -1], [40, 64, -1], [145, 52, 0], [220, 64, -1], [325, 62, -1]]
    .forEach(([a, w, d]) => device(P + third(a), T + 49 + d, third(w), 18, true));
  [-155, -15, 30, 110, 210, 300, 400].forEach(a => noise(Math.round(P + third(a)), Math.round(P + third(a)) + 9, T + 26, T + 34, ['#d030c0', '#000', '#9020a0'], .3));
});

// well boundary between the device rows
box(L, T + 42, R - L, 1, '#f6e7d0');
box(L, T + 44, R - L, 3, CREAM);
noise(L + 6, R - 8, T + 43, T + 47, ['#60d8d0', '#e0a060', '#000', '#fff8e0'], .16);
box(L, T, 2, 46, CREAM); box(L + 3, T + 2, 1, 42, CREAM);
box(R, T, 2, 46, CREAM); box(R - 8, T + 1, 9, 2, CREAM);
frame(L + 5, T + 2, 12, 11, '#e08030');

// supply rail at the bottom
box(L + 8, T + 75, R - L - 16, 1, CYAN);
['#70bcbc', '#a0b8bc', '#b4ccd0', '#90bcbc', '#b8c8cc', '#3fdcde', '#284444', '#3a9c9c', '#284444', '#40b0b4', '#1c3030', '#30e8e8', '#182020']
  .forEach((c, i) => box(L + 8, T + 76 + i, R - L - 18, 1, c));
noise(L + 8, R - 10, T + 76, T + 88, [CYAN, '#30e8e8', '#b49cac', '#385050', '#c4ccd4'], .3);
noise(L + 8, R - 10, T + 82, T + 89, ['#000', '#b08c8c', CYAN], .2);

// vertical metal
for (let x = L + 10; x < R - 12; x += 4 + Math.floor(rnd() * 8)) {
  const top = pick([1, 1, 1, 14, 42]), bottom = pick([46, 88, 88, 88]);
  if (bottom > top) box(x, T + top, rnd() < .15 ? 2 : 1, bottom - top, pick([CYAN, CYAN, CYAN, '#28b8b8']));
  if (rnd() < .4) box(x + 3, T + 40, 2, 12, pick(['#2020d0', '#c8b898', '#40c0c0', '#e8e0d8']));
}

// local routing around each cell
starts.forEach(P => {
  const y = '#f4ec20';
  noise(P, P + 262, T + 9, T + 13, ['#8a20e0', '#b040f0', '#6010c0'], .7);
  [1, 47, 131, 260].forEach(x => box(P + x, T + 9, 1, 34, '#a030e0'));
  noise(P + 40, P + 100, T + 59, T + 61, ['#b020d0', '#7010c0'], .6);
  box(P - 130, T + 65, 82, 1, y); box(P - 50, T + 31, 1, 35, y); box(P - 130, T + 46, 2, 20, y);
  box(P + 3, T + 32, 28, 1, y); box(P + 3, T + 32, 2, 15, y);
  box(P + 97, T + 35, 24, 1, y); box(P + 97, T + 35, 1, 12, y);
  box(P + 115, T + 52, 42, 1, y); box(P + 115, T + 54, 26, 1, '#c8a020');
  for (let x = P - 196; x < P - 74; x += 4) { box(x, T + 27, 3, 1, y); box(x + 1, T + 30, 2, 1, '#e0b040'); }
  frame(P - 158, T + 50, 16, 3, CYAN); frame(P - 110, T + 50, 16, 3, CYAN);
  box(P + 22, T + 68, 22, 1, '#2020c0'); box(P + 90, T + 68, 16, 1, '#2020c0');
  box(P + 3, T + 66, 1, 12, '#e8e0e0'); box(P + 6, T + 66, 1, 12, '#e8e0e0');
});
frame(L, T, R - L + 2, 89, '#807470');
box(L, T, R - L + 2, 1, '#fff0cc');
box(R, T, 2, 46, CREAM);

// origin axes
box(AX, 0, 1, H, '#fff');
box(0, AY, W, 1, '#fff');
for (let x = AX; x < W; x += STEP * 5) box(x, AY - 1, 1, 3, '#fff');
```
